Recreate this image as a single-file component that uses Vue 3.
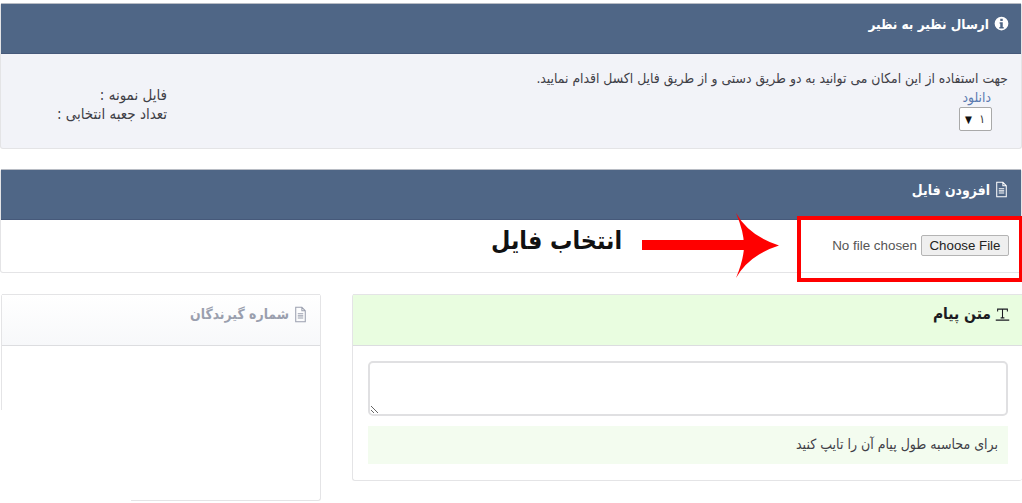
<script setup>
const filePath = 'M4 1.5h9l5 5V22.5H4z M13 1.5V6.5H18 M7 11h8 M7 14h8 M7 17h8'
</script>

<template>
  <div class="page" dir="rtl">
    <section class="card first">
      <header class="head dark">
        <svg class="ic info-ic" viewBox="0 0 24 24"><path fill="currentColor" fill-rule="evenodd" d="M12 1a11 11 0 1 0 0 22 11 11 0 0 0 0-22zM10 4.500h4v3.500h-4zM9 10h5v7.500h1.500V20h-7v-2.500H10V12.500H9z"/></svg>
        <h2>ارسال نظیر به نظیر</h2>
      </header>
      <div class="info">
        <div class="info-main">
          <p class="lead">جهت استفاده از این امکان می توانید به دو طریق دستی و از طریق فایل اکسل اقدام نمایید.</p>
          <a class="dl">دانلود</a>
          <div class="sel"><span>۱</span><i>▼</i></div>
        </div>
        <div class="info-side">
          <div>فایل نمونه :</div>
          <div>تعداد جعبه انتخابی :</div>
        </div>
      </div>
    </section>

    <section class="card second">
      <header class="head dark">
        <svg class="ic file" viewBox="0 0 22 24"><path fill="none" stroke="currentColor" stroke-width="1.500" :d="filePath"/></svg>
        <h2 class="small">افزودن فایل</h2>
      </header>
      <div class="upload">
        <input class="file-input" type="file" />
        <span class="hint-big">انتخاب فایل</span>
        <svg class="arrow" viewBox="0 0 140 66"><path fill="#f00" d="M1 27H103V37H1zM95 0Q108 23 138 32.500Q108 42 95 65Q103 46 103 32.500Q103 19 95 0z"/></svg>
        <div class="redbox"></div>
      </div>
    </section>

    <div class="row">
      <section class="card msg">
        <header class="head green">
          <svg class="ic tt" viewBox="0 0 20 20"><path fill="none" stroke="currentColor" stroke-width="1.400" d="M3.500 6V2.800H16.500V6M10 2.800V14.500M7.500 14.500H12.500M1 17.500H19"/></svg>
          <h2 class="msg-title">متن پیام</h2>
        </header>
        <div class="msg-body">
          <textarea class="ta"></textarea>
          <div class="note">برای محاسبه طول پیام آن را تایپ کنید</div>
        </div>
      </section>
      <section class="card recv">
        <header class="head light">
          <svg class="ic file" viewBox="0 0 22 24"><path fill="none" stroke="currentColor" stroke-width="1.500" :d="filePath"/></svg>
          <h2 class="small">شماره گیرندگان</h2>
        </header>
      </section>
    </div>
  </div>
</template>

<style scoped>
.page {
  width: 1022px;
  height: 503px;
  overflow: hidden;
  box-sizing: border-box;
  padding: 3px 0 0;
  background: #fff;
  font-family: "DejaVu Sans Condensed", "DejaVu Sans", sans-serif;
  color: #3f4047;
}
.card {
  box-sizing: border-box;
  border: 1px solid #e4e4e6;
  border-top: 0;
  border-radius: 3px;
  background: #fff;
}
.first { margin: 0 0 20px; height: 146px; background: #f2f3f8; }
.second { height: 104px; margin-bottom: 21px; position: relative; }
.head {
  height: 51px;
  box-sizing: border-box;
  display: flex;
  align-items: center;
  gap: 4px;
  padding: 0 12px 10px;
  border-bottom: 1px solid #dcdde0;
}
.dark { background: #4f6686; color: #fff; border-top: 1px solid #b8bcc4; border-bottom-color: #46597a; }
.green { background: #e9fde0; color: #1b1b22; border-top: 1px solid #e4e4e6; height: 52px; padding-bottom: 12px; }
.light { background: linear-gradient(#fff, #f7f8fa); color: #9a9fae; border-top: 1px solid #e4e4e6; height: 52px; padding-bottom: 12px; }
h2 { margin: 0; font-size: 13.500px; font-weight: 700; line-height: 20px; }
h2.small { font-size: 13.900px; }
h2.msg-title { font-size: 15.500px; }
.ic { width: 16px; height: 16px; flex: none; }
.info-ic { width: 15px; height: 15px; margin-left: 1px; margin-right: 0; }
.ic.file { width: 15px; height: 17px; }
.ic.tt { width: 15px; height: 15px; }
.info { display: flex; justify-content: space-between; padding: 15px 13px 0 855px; font-size: 13.800px; line-height: 19px; position: relative; }
.info-main { flex: none; width: 0; white-space: nowrap; }
.lead { margin: 0; width: 480px; }
.dl { display: block; color: #5b7ab0; margin-right: 17px; }
.sel {
  width: 33px; height: 24px; box-sizing: border-box;
  margin-right: 16px;
  border: 1px solid #a9a9a9; border-radius: 2px; background: #fff;
  display: flex; align-items: center; justify-content: space-between;
  padding: 0 6px 0 5px; font-size: 12px; color: #333;
}
.sel i { font-style: normal; font-size: 10px; color: #111; }
.info-side { position: absolute; left: 56px; top: 32px; width: 110px; line-height: 19px; font-size: 15px; white-space: nowrap; }
.upload { height: 52px; }
.file-input {
  position: absolute; right: 12px; top: 66px;
  width: 190px; font: 13.400px/1.2 "Liberation Sans", sans-serif; color: #555;
}
.file-input::file-selector-button {
  width: 88px; height: 21px; font: 13.300px "Liberation Sans", sans-serif;
  background: #efefef; border: 1px solid #b4b4b4; border-radius: 2px; color: #222;
}
.hint-big {
  position: absolute; left: 490px; top: 56px;
  font-size: 24.800px; font-weight: 700; color: #111; line-height: 32px;
}
.arrow { position: absolute; left: 640px; top: 44px; width: 140px; height: 66px; }
.redbox {
  position: absolute; left: 796px; top: 47px; width: 226px; height: 66px;
  box-sizing: border-box; border: 4px solid #f00;
}
.row { display: flex; justify-content: flex-start; gap: 31px; padding-left: 1px; }
.msg { width: 670px; height: 187px; border-left: 1px solid #e4e4e6; border-right: 0; }
.recv { width: 320px; height: 207px; position: relative; }
.recv::after {
  content: ""; position: absolute; left: -1px; top: 116px; width: 130px; bottom: -1px; background: #fff;
}
.msg-body { padding: 15px 14px 0 15px; }
.ta {
  display: block; width: 100%; height: 55px; box-sizing: border-box;
  border: 2px solid #e0e0e2; border-radius: 5px; background: #fff; margin: 0;
}
.note {
  margin-top: 10px; height: 38px; background: #f3fcef;
  padding: 0 10px; font-size: 14px; line-height: 36px; color: #3f4047;
}
</style>
